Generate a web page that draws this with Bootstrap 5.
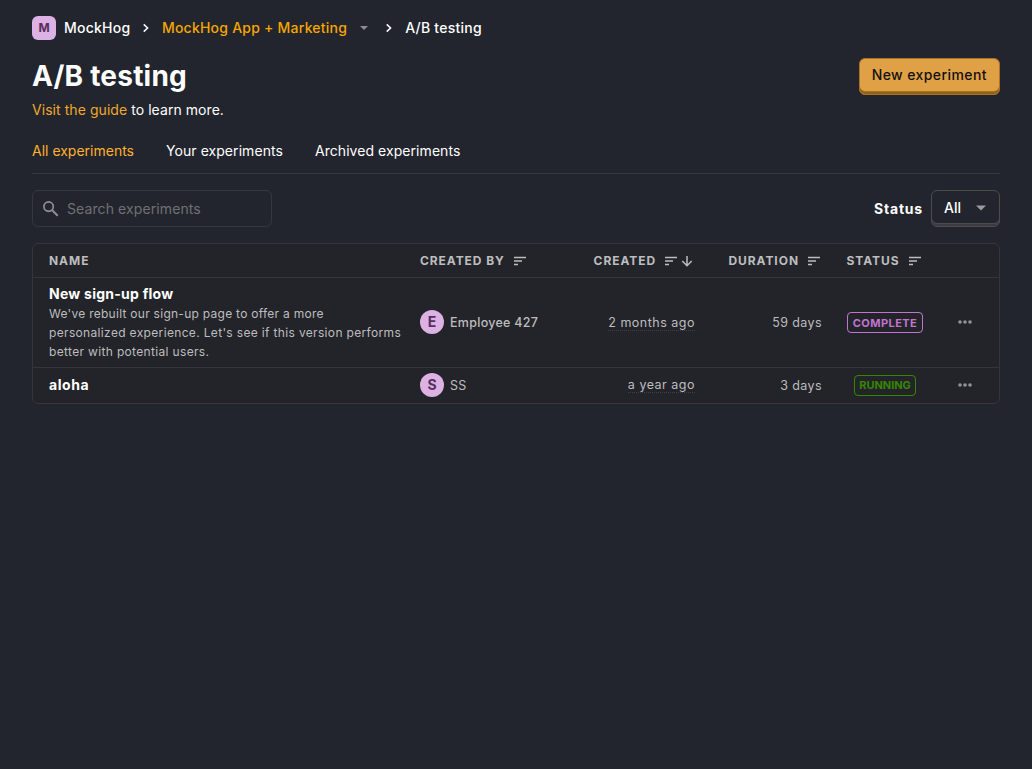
<!DOCTYPE html>
<html lang="en" data-bs-theme="dark">
<head>
<meta charset="utf-8">
<meta name="viewport" content="width=device-width, initial-scale=1">
<title>A/B testing</title>
<link href="https://cdn.jsdelivr.net/npm/bootstrap@5.3.0/dist/css/bootstrap.min.css" rel="stylesheet">
<style>
  body { background: #22252d; color: #fff; font-family: Inter, "Noto Sans", sans-serif; font-size: 14px; line-height: 20px; }
  svg { display: block; flex: none; }
  .page-body { padding: 0 32px; }
  .crumbs { height: 56px; font-weight: 500; letter-spacing: .24px; }
  .crumb-project { letter-spacing: .23px; margin-left: -.5px; }
  .crumb-caret { margin: 0 12px 0 12px; }
  .amber { color: #f7a501; }
  .amber-soft { color: #f1a82c; }
  .letter { width: 24px; height: 24px; background: #dcb1e3; color: #572e5e; font-size: 14px; font-weight: 700; letter-spacing: 0; }
  .letter.square { border-radius: 6px; font-size: 12px; }
  .page-title { font-size: 28px; line-height: 36px; font-weight: 700; margin-top: 2px; letter-spacing: .22px; }
  .intro { margin-top: 5px; letter-spacing: .06px; }
  .btn-3d, .btn-pick { height: 37px; border-radius: 6px; font-size: 14px; font-weight: 500; padding: 0 12px 2px; line-height: 32px; }
  .btn-3d { margin-top: 2px; border: 1px solid #a87421; background: #e0a045; color: #111; letter-spacing: .42px; padding-bottom: 4px; box-shadow: inset 0 -2px #8f6119, inset 0 -3px #a87421; }
  .btn-pick { width: 69px; border: 1px solid #4b4c50; background: #22252d; color: #fff; box-shadow: inset 0 -2px #3b3c40, inset 0 -3px #4b4c50; }
  .status-label { letter-spacing: .8px; font-weight: 700; }
  .tab-line { margin-top: 9px; gap: 32px; height: 45px; border-bottom: 1px solid #35373e; }
  .tab-line .nav-link { padding: 12px 0; color: #fff; letter-spacing: .06px; }
  .tab-line .nav-link.active { color: #ffb02e; letter-spacing: 0; }
  .search { width: 240px; height: 37px; border: 1px solid #35373e; border-radius: 6px; padding: 0 9px; gap: 8px; }
  .search input { background: none; border: 0; outline: 0; padding: 0; color: #fff; min-width: 0; letter-spacing: .1px; }
  .search input::placeholder { color: #707174; opacity: 1; }
  .grid-wrap { border: 1px solid #35363b; border-radius: 6px; background: #232429; overflow: hidden; }
  .grid-wrap table { width: 100%; table-layout: fixed; border-collapse: separate; border-spacing: 0; }
  .grid-wrap th, .grid-wrap td { padding: 0 8px; vertical-align: middle; color: #bdbdbf; font-size: 12.5px; letter-spacing: .28px; }
  .grid-wrap th { height: 33px; font-size: 12px; font-weight: 700; letter-spacing: .95px; padding-right: 9px; }
  .grid-wrap th:nth-child(5) { padding: 0 9px 0 7px; }
  .grid-wrap th .tight { letter-spacing: .93px; }
  .grid-wrap td { border-top: 1px solid #35363b; padding-bottom: 2px; }
  .grid-wrap th:first-child, .grid-wrap td:first-child { padding-left: 16px; }
  .grid-wrap td.flush { padding-bottom: 0; }
  .grid-wrap td:last-child { padding-right: 18px; }
  .row-tall td { height: 90px; }
  .row-short td { height: 36px; }
  .c-name { width: 379px; } .c-by { width: 173px; } .c-created { width: 118px; }
  .c-dur { width: 127px; } .c-status { width: 110px; }
  .person { gap: 6px; }
  .person-name { padding-top: 2px; }
  .name { font-size: 14px; font-weight: 700; color: #fff; letter-spacing: .25px; }
  .row-short .name { letter-spacing: .6px; }
  .desc { font-size: 12px; line-height: 19px; letter-spacing: .34px; }
  .desc-lead { letter-spacing: .27px; }
  .ago { border-bottom: 1px dotted #404146; height: 17px; line-height: 18px; letter-spacing: .5px; }
  .grid-wrap td.days { letter-spacing: .4px; padding-bottom: 0; }
  .tag { height: 21px; border: 1px solid; border-radius: 4px; padding: 0 4px; font-size: 11px; font-weight: 700; line-height: 20px; }
  .tag.done { color: #c274cf; width: 76px; letter-spacing: .45px; }
  .tag.live { color: #388600; width: 62px; line-height: 18px; letter-spacing: -.02px; }
</style>
</head>
<body>
<svg class="d-none" aria-hidden="true">
  <symbol id="sort" viewBox="0 0 14 14"><path d="M1 3.5h12M1 7h8M1 10.5h4" fill="none" stroke="currentColor" stroke-width="1.3"/></symbol>
  <symbol id="chev" viewBox="0 0 14 14"><path d="M5 3.8 8.4 7 5 10.2" fill="none" stroke="currentColor" stroke-width="1.3"/></symbol>
  <symbol id="dots" viewBox="0 0 16 16"><circle cx="3" cy="8" r="1.8"/><circle cx="8" cy="8" r="1.8"/><circle cx="13" cy="8" r="1.8"/></symbol>
</svg>
<main class="container-fluid page-body">
  <nav class="crumbs d-flex align-items-center" aria-label="breadcrumb">
    <span class="letter square d-flex align-items-center justify-content-center me-2">M</span>
    <span>MockHog</span>
    <svg class="mx-2" width="16" height="16"><use href="#chev"/></svg>
    <span class="amber crumb-project">MockHog App + Marketing</span>
    <svg class="crumb-caret" width="10" height="10" viewBox="0 0 10 10"><path d="M1 3h8L5 7z" fill="#8c8d90"/></svg>
    <svg class="me-2" width="16" height="16"><use href="#chev"/></svg>
    <span>A/B testing</span>
  </nav>
  <header class="d-flex justify-content-between align-items-start">
    <h1 class="page-title mb-0">A/B testing</h1>
    <button class="btn-3d">New experiment</button>
  </header>
  <p class="mb-0 intro"><span class="amber-soft">Visit the guide</span> to learn more.</p>
  <ul class="nav tab-line flex-nowrap">
    <li class="nav-item"><a class="nav-link active">All experiments</a></li>
    <li class="nav-item"><a class="nav-link">Your experiments</a></li>
    <li class="nav-item"><a class="nav-link">Archived experiments</a></li>
  </ul>
  <section class="d-flex justify-content-between align-items-center my-3">
    <label class="search d-flex align-items-center">
      <svg width="17" height="17" viewBox="0 0 17 17" fill="none" stroke="#8f9093"><circle cx="6.6" cy="6.6" r="4.7" stroke-width="1.7"/><path d="m10.2 10.2 5.5 5.5" stroke-width="2"/></svg>
      <input class="flex-grow-1" type="text" placeholder="Search experiments">
    </label>
    <div class="d-flex align-items-center gap-2">
      <span class="status-label">Status</span>
      <button class="btn-pick d-flex align-items-center justify-content-between">All
        <svg width="12" height="12" viewBox="0 0 12 12"><path d="M1 3.5h10l-5 5z" fill="#9a9b9d"/></svg>
      </button>
    </div>
  </section>
  <div class="grid-wrap">
    <table>
      <colgroup><col class="c-name"><col class="c-by"><col class="c-created"><col class="c-dur"><col class="c-status"><col></colgroup>
      <thead>
        <tr>
          <th>NAME</th>
          <th><div class="d-flex align-items-center"><span class="tight">CREATED BY</span><svg class="ms-2" width="14" height="14"><use href="#sort"/></svg></div></th>
          <th><div class="d-flex align-items-center justify-content-end"><span class="tight">CREATED</span><svg class="ms-2" width="14" height="14"><use href="#sort"/></svg><svg style="margin-left:2px" width="14" height="14" viewBox="0 0 14 14"><path d="M7 2v9.5M2.3 7 7 11.7 11.7 7" fill="none" stroke="currentColor" stroke-width="1.5"/></svg></div></th>
          <th><div class="d-flex align-items-center justify-content-end">DURATION<svg class="ms-2" width="14" height="14"><use href="#sort"/></svg></div></th>
          <th><div class="d-flex align-items-center justify-content-center">STATUS<svg class="ms-2" width="14" height="14"><use href="#sort"/></svg></div></th>
          <th></th>
        </tr>
      </thead>
      <tbody>
        <tr class="row-tall">
          <td class="flush"><div class="name">New sign-up flow</div><div class="desc"><span class="desc-lead">We've rebuilt our sign-up page to offer a more</span><br>personalized experience. Let's see if this version performs<br>better with potential users.</div></td>
          <td><div class="person d-flex align-items-center"><span class="letter rounded-circle d-flex align-items-center justify-content-center">E</span><span class="person-name fw-medium">Employee 427</span></div></td>
          <td class="flush text-end"><span class="ago d-inline-block">2 months ago</span></td>
          <td class="text-end days">59 days</td>
          <td class="flush text-center"><span class="tag done d-inline-block align-middle">COMPLETE</span></td>
          <td><svg class="mx-auto" width="16" height="16" fill="#929396"><use href="#dots"/></svg></td>
        </tr>
        <tr class="row-short">
          <td><div class="name">aloha</div></td>
          <td><div class="person d-flex align-items-center"><span class="letter rounded-circle d-flex align-items-center justify-content-center">S</span><span class="person-name">SS</span></div></td>
          <td class="text-end"><span class="ago d-inline-block">a year ago</span></td>
          <td class="text-end days">3 days</td>
          <td class="flush text-center"><span class="tag live d-inline-block align-middle">RUNNING</span></td>
          <td><svg class="mx-auto" width="16" height="16" fill="#929396"><use href="#dots"/></svg></td>
        </tr>
      </tbody>
    </table>
  </div>
</main>
<script src="https://cdn.jsdelivr.net/npm/bootstrap@5.3.0/dist/js/bootstrap.bundle.min.js"></script>
</body>
</html>
